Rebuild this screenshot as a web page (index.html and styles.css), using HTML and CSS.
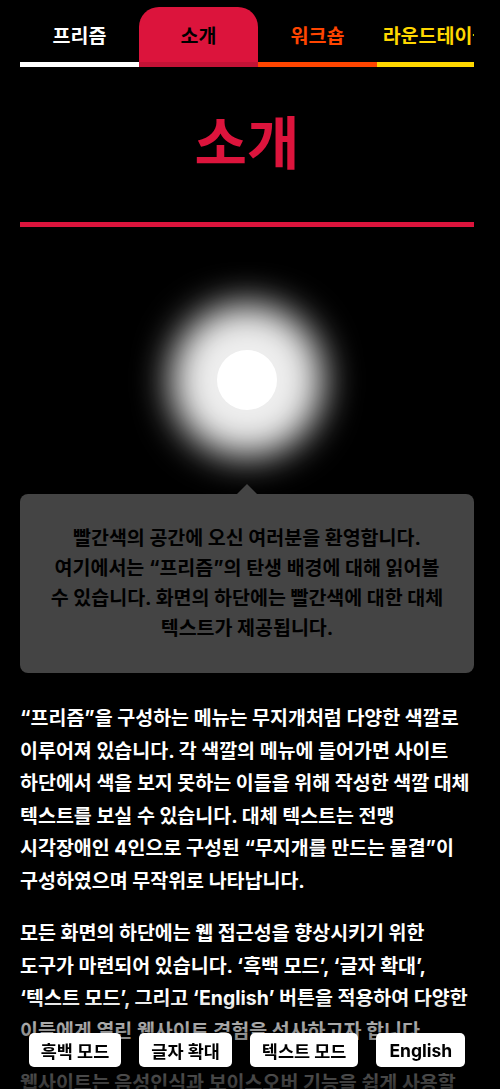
FILE: index.html
```html
<!DOCTYPE html>
<html lang="ko">
<head>
<meta charset="utf-8">
<title>소개 - 프리즘</title>
<link rel="stylesheet" href="styles.css">
</head>
<body>
<nav class="tabs">
  <a class="tab tab-prism" href="#">프리즘</a>
  <a class="tab tab-about is-active" href="#">소개</a>
  <a class="tab tab-workshop" href="#">워크숍</a>
  <a class="tab tab-round" href="#">라운드테이블</a>
</nav>
<main class="page">
  <h1 class="title">소개</h1>
  <hr class="rule">
  <div class="glow-wrap"><div class="glow"></div></div>
  <div class="bubble">
    <p>빨간색의 공간에 오신 여러분을 환영합니다. 여기에서는 “프리즘”의 탄생 배경에 대해 읽어볼 수 있습니다. 화면의 하단에는 빨간색에 대한 대체 텍스트가 제공됩니다.</p>
  </div>
  <div class="body-text">
    <p>“프리즘”을 구성하는 메뉴는 무지개처럼 다양한 색깔로 이루어져 있습니다. 각 색깔의 메뉴에 들어가면 사이트 하단에서 색을 보지 못하는 이들을 위해 작성한 색깔 대체 텍스트를 보실 수 있습니다. 대체 텍스트는 전맹 시각장애인 4인으로 구성된 “무지개를 만드는 물결”이 구성하였으며 무작위로 나타납니다.</p>
    <p>모든 화면의 하단에는 웹 접근성을 향상시키기 위한 도구가 마련되어 있습니다. ‘흑백 모드’, ‘글자 확대’, ‘텍스트 모드’, 그리고 ‘English’ 버튼을 적용하여 다양한 이들에게 열린 웹사이트 경험을 선사하고자 합니다.</p>
    <p>웹사이트는 음성인식과 보이스오버 기능을 쉽게 사용할 수 있도록 구성되었습니다.</p>
  </div>
</main>
<div class="toolbar">
  <button class="tool" type="button">흑백 모드</button>
  <button class="tool" type="button">글자 확대</button>
  <button class="tool" type="button">텍스트 모드</button>
  <button class="tool tool-en" type="button">English</button>
</div>
</body>
</html>
```
FILE: styles.css
```css
* { box-sizing: border-box; }

html, body {
  margin: 0;
  background: #000;
}

body {
  padding: 0 26px 120px 20px;
  font-family: Inter, "Noto Sans CJK KR", sans-serif;
  font-weight: 700;
  color: #fff;
  word-break: keep-all;
}

.tabs {
  display: flex;
  overflow: hidden;
  padding-top: 7px;
}

.tab {
  flex: 0 0 119px;
  height: 60px;
  display: flex;
  align-items: center;
  justify-content: center;
  white-space: nowrap;
  font-size: 19.5px;
  font-weight: 700;
  text-decoration: none;
  border-bottom: 5px solid;
}

.tab-prism { color: #fff; border-color: #fff; }
.tab-workshop { color: #ff4500; border-color: #ff4500; }
.tab-round { color: #ffd700; border-color: #ffd700; }
.tab-about { color: #dc143c; border-color: #dc143c; }

.tab.is-active {
  background: #dc143c;
  color: #000;
  border-color: #c41236;
  border-radius: 20px 20px 0 0;
}

.title {
  margin: 45px 0 0;
  font-size: 57px;
  line-height: 64px;
  font-weight: 700;
  text-align: center;
  color: #dc143c;
}

.rule {
  margin: 46px 0 0;
  border: 0;
  height: 5px;
  background: #dc143c;
}

.glow-wrap {
  display: flex;
  justify-content: center;
  padding-top: 123px;
}

.glow {
  width: 60px;
  height: 60px;
  border-radius: 50%;
  background: #fff;
  box-shadow: 0 0 36px 46px rgb(238, 238, 238);
}

.bubble {
  position: relative;
  margin-top: 84px;
  background: #444;
  border-radius: 8px;
  padding: 29px 27px 30px;
  text-align: center;
  color: #000;
  font-size: 19.5px;
  line-height: 30px;
}

.bubble::before {
  content: "";
  position: absolute;
  top: -10px;
  left: 50%;
  margin-left: -10px;
  border-left: 10px solid transparent;
  border-right: 10px solid transparent;
  border-bottom: 10px solid #444;
}

.bubble p { margin: 0; }

.body-text {
  margin-top: 29px;
  font-size: 19.5px;
  line-height: 32.6px;
}

.body-text p { margin: 0 0 19.5px; }

.toolbar {
  position: fixed;
  left: 20px;
  right: 26px;
  bottom: 0;
  height: 92px;
  display: flex;
  justify-content: center;
  align-items: flex-end;
  gap: 18px;
  padding-bottom: 22px;
}

.toolbar::before {
  content: "";
  position: fixed;
  left: 0;
  right: 0;
  bottom: 0;
  height: 92px;
  z-index: -1;
  background: linear-gradient(to bottom, rgba(0,0,0,0) 0%, rgba(0,0,0,0.4) 35%, rgba(0,0,0,0.8) 100%);
}

.tool {
  height: 34px;
  padding: 0 12px;
  border: 0;
  border-radius: 5px;
  background: #fff;
  color: #000;
  font-family: Inter, "Noto Sans CJK KR", sans-serif;
  font-weight: 700;
  font-size: 17.5px;
  cursor: pointer;
}

.tool-en { padding: 0 13px; }
```
